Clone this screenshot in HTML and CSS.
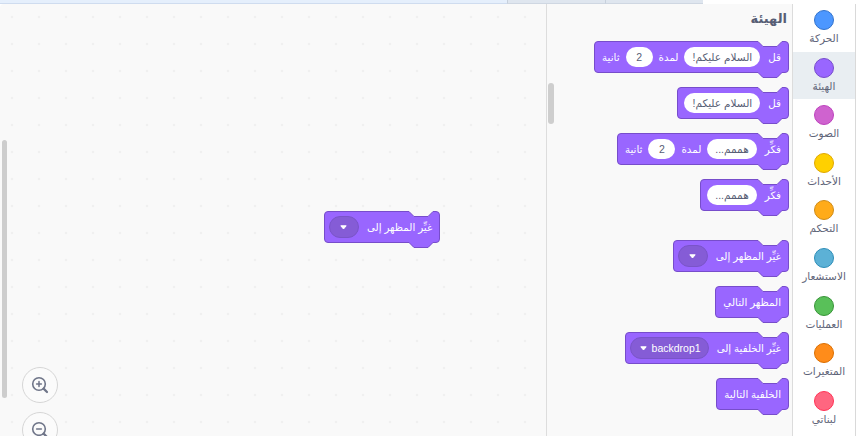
FILE: index.html
```html
<!DOCTYPE html>
<html lang="ar" dir="rtl">
<head>
<meta charset="utf-8">
<link rel="stylesheet" href="styles.css">
</head>
<body>
<div class="app">
  <div class="topbar">
    <div class="tb-blank"></div>
    <div class="tb-tab"></div>
    <div class="tb-tab"></div>
    <div class="tb-stage"></div>
  </div>
  <div class="main">
    <nav class="cats">
      <div class="cat"><span class="dot motion"></span><span class="cat-label">الحركة</span></div>
      <div class="cat selected"><span class="dot looks"></span><span class="cat-label">الهيئة</span></div>
      <div class="cat"><span class="dot sound"></span><span class="cat-label">الصوت</span></div>
      <div class="cat"><span class="dot events"></span><span class="cat-label">الأحداث</span></div>
      <div class="cat"><span class="dot control"></span><span class="cat-label">التحكم</span></div>
      <div class="cat"><span class="dot sensing"></span><span class="cat-label">الاستشعار</span></div>
      <div class="cat"><span class="dot operators"></span><span class="cat-label">العمليات</span></div>
      <div class="cat"><span class="dot variables"></span><span class="cat-label">المتغيرات</span></div>
      <div class="cat"><span class="dot myblocks"></span><span class="cat-label">لبناتي</span></div>
    </nav>

    <section class="flyout">
      <div class="fly-scroll"></div>
      <h2 class="fly-title">الهيئة</h2>
      <div class="block"><span class="lead">قل</span><span class="input">السلام عليكم!</span><span>لمدة</span><span class="input num">2</span><span>ثانية</span></div>
      <div class="block ends-input"><span class="lead">قل</span><span class="input">السلام عليكم!</span></div>
      <div class="block"><span class="lead">فكِّر</span><span class="input">هممم...</span><span>لمدة</span><span class="input num">2</span><span>ثانية</span></div>
      <div class="block ends-input"><span class="lead">فكِّر</span><span class="input">هممم...</span></div>
      <div class="block ends-dd group-start"><span class="lead">غيِّر المظهر إلى</span><span class="dd empty"><svg class="arrow" width="7" height="5" viewBox="0 0 7 5"><path d="M0.8 0.8 H6.2 L3.5 4 Z" fill="#fff" stroke="#fff" stroke-width="1" stroke-linejoin="round"/></svg></span></div>
      <div class="block"><span>المظهر التالي</span></div>
      <div class="block ends-dd"><span class="lead">غيِّر الخلفية إلى</span><span class="dd"><span class="dd-text">backdrop1</span><svg class="arrow" width="7" height="5" viewBox="0 0 7 5"><path d="M0.8 0.8 H6.2 L3.5 4 Z" fill="#fff" stroke="#fff" stroke-width="1" stroke-linejoin="round"/></svg></span></div>
      <div class="block"><span>الخلفية التالية</span></div>
    </section>

    <section class="workspace">
      <div class="ws-scroll"></div>
      <div class="block ends-dd ws-block"><span class="lead">غيِّر المظهر إلى</span><span class="dd empty"><svg class="arrow" width="7" height="5" viewBox="0 0 7 5"><path d="M0.8 0.8 H6.2 L3.5 4 Z" fill="#fff" stroke="#fff" stroke-width="1" stroke-linejoin="round"/></svg></span></div>
      <div class="zoom-btns">
        <div class="zoom-btn">
          <svg width="22" height="22" viewBox="0 0 22 22"><circle cx="10" cy="10" r="6.3" fill="none" stroke="#575e75" stroke-width="1.6"/><path d="M14.6 14.6 L18 18" stroke="#575e75" stroke-width="2.2" stroke-linecap="round"/><path d="M10 7.6 V12.4 M7.6 10 H12.4" stroke="#575e75" stroke-width="1.5" stroke-linecap="round"/></svg>
        </div>
        <div class="zoom-btn">
          <svg width="22" height="22" viewBox="0 0 22 22"><circle cx="10" cy="10" r="6.3" fill="none" stroke="#575e75" stroke-width="1.6"/><path d="M14.6 14.6 L18 18" stroke="#575e75" stroke-width="2.2" stroke-linecap="round"/><path d="M7.6 10 H12.4" stroke="#575e75" stroke-width="1.5" stroke-linecap="round"/></svg>
        </div>
      </div>
    </section>
  </div>
</div>
</body>
</html>
```

FILE: styles.css
```css
html, body {
  margin: 0;
  padding: 0;
}
body {
  width: 856px;
  height: 436px;
  overflow: hidden;
  font-family: "Liberation Sans", "DejaVu Sans", sans-serif;
  background: #ffffff;
}
.app {
  display: flex;
  flex-direction: column;
  height: 436px;
}
.topbar {
  height: 4px;
  display: flex;
  flex-direction: row-reverse;
  flex-shrink: 0;
}
.tb-blank {
  width: 507px;
  background: #e5effc;
  border-bottom: 1px solid #cfdcef;
  box-sizing: border-box;
}
.tb-tab {
  width: 98px;
  background: #dfe6ef;
  border-left: 1px solid #c7d0dc;
  border-bottom: 1px solid #cfd7e2;
  box-sizing: border-box;
}
.tb-stage {
  flex: 1;
  background: #ffffff;
}
.main {
  flex: 1;
  display: flex;
  min-height: 0;
}

/* category menu */
.cats {
  width: 62px;
  flex-shrink: 0;
  background: #ffffff;
  border-left: 1px solid #dcdcdc;
  border-right: 1px solid #d9d9d9;
  display: flex;
  flex-direction: column;
}
.cat {
  height: 47.6px;
  display: flex;
  flex-direction: column;
  align-items: center;
  padding-top: 6px;
  box-sizing: border-box;
}
.cat.selected {
  background: #e9eef2;
}
.dot {
  width: 20px;
  height: 20px;
  border-radius: 50%;
  box-sizing: border-box;
  border: 1px solid;
}
.cat-label {
  margin-top: 2px;
  font-size: 10.5px;
  line-height: 13px;
  color: #5f6579;
  white-space: nowrap;
}
.motion { background: #4c97ff; border-color: #3373cc; }
.looks { background: #9966ff; border-color: #774dcb; }
.sound { background: #cf63cf; border-color: #bd42bd; }
.events { background: #ffd000; border-color: #e0a800; }
.control { background: #ffab19; border-color: #cf8b17; }
.sensing { background: #5cb1d6; border-color: #2e8eb8; }
.operators { background: #59c059; border-color: #389438; }
.variables { background: #ff8c1a; border-color: #db6e00; }
.myblocks { background: #ff6680; border-color: #ff3355; }

/* flyout */
.flyout {
  width: 246px;
  flex-shrink: 0;
  background: #f9f9f9;
  border-left: 1px solid #dddddd;
  position: relative;
  display: flex;
  flex-direction: column;
  align-items: flex-start;
  padding: 7px 3px 0 0;
  box-sizing: border-box;
}
.fly-title {
  margin: 0 2px 14px 0;
  font-size: 13px;
  line-height: 16px;
  font-weight: bold;
  color: #575e75;
}
.fly-scroll {
  position: absolute;
  left: 1px;
  top: 79px;
  width: 6px;
  height: 41px;
  border-radius: 3px;
  background: #cecece;
}

/* blocks */
.block {
  position: relative;
  display: inline-flex;
  align-items: center;
  gap: 6px;
  height: 32px;
  padding: 0 7px;
  margin-bottom: 14px;
  box-sizing: border-box;
  background: #9966ff;
  border: 1px solid #774dcb;
  border-radius: 4px;
  color: #ffffff;
  font-size: 10.3px;
  white-space: nowrap;
}
.block .lead {
  margin-left: 2px;
}
.block.ends-input {
  padding-left: 6px;
}
.block.ends-dd {
  padding-left: 4px;
}
.block.group-start {
  margin-top: 15px;
}
.block::before {
  content: "";
  position: absolute;
  top: -1px;
  right: 5px;
  width: 26px;
  height: 7px;
  background-image: url("data:image/svg+xml,%3Csvg xmlns='http://www.w3.org/2000/svg' width='26' height='7'%3E%3Cpath d='M0 0 H26 V0.5 H25 L20 5.5 H6 L1 0.5 H0 Z' fill='%23f9f9f9'/%3E%3Cpath d='M0 0.5 H1 L6 5.5 H20 L25 0.5 H26' fill='none' stroke='%23774dcb'/%3E%3C/svg%3E");
}
.block::after {
  content: "";
  position: absolute;
  bottom: -7px;
  right: 5px;
  width: 26px;
  height: 7px;
  background-image: url("data:image/svg+xml,%3Csvg xmlns='http://www.w3.org/2000/svg' width='26' height='7'%3E%3Cpath d='M0.5 0 L6 5.8 H20 L25.5 0 Z' fill='%239966ff'/%3E%3Cpath d='M0 0.5 H1 L6 5.5 H20 L25 0.5 H26' fill='none' stroke='%23774dcb'/%3E%3C/svg%3E");
}
.input {
  display: inline-flex;
  align-items: center;
  justify-content: center;
  height: 20px;
  min-width: 27px;
  padding: 0 8px;
  box-sizing: border-box;
  border-radius: 10px;
  background: #ffffff;
  color: #575e75;
  font-size: 10.5px;
}
.dd {
  display: inline-flex;
  align-items: center;
  gap: 5px;
  height: 22px;
  padding: 0 7px 0 9px;
  box-sizing: border-box;
  border-radius: 11px;
  background: #855cd6;
  border: 1px solid #7a54c9;
  color: #ffffff;
}
.dd.empty {
  padding: 0 11px 0 10px;
}
.dd-text {
  font-size: 10.5px;
}
.arrow {
  display: block;
}

/* workspace */
.workspace {
  flex: 1;
  position: relative;
  background-color: #f9f9f9;
  background-image: radial-gradient(circle, #dedede 0.6px, rgba(222,222,222,0) 1.1px);
  background-size: 27px 27px;
  background-position: -1.5px -0.5px;
  border-top-left-radius: 4px;
  overflow: hidden;
}
.ws-scroll {
  position: absolute;
  left: 2px;
  top: 136px;
  width: 5px;
  height: 258px;
  border-radius: 3px;
  background: #cdcdcd;
}
.ws-block {
  position: absolute;
  left: 324px;
  top: 207px;
  margin: 0;
}
.zoom-btns {
  position: absolute;
  left: 22px;
  top: 363px;
  display: flex;
  flex-direction: column;
  gap: 9px;
}
.zoom-btn {
  width: 36px;
  height: 36px;
  box-sizing: border-box;
  border-radius: 50%;
  border: 1.5px solid #d6d6d6;
  background: #fbfbfb;
  display: flex;
  align-items: center;
  justify-content: center;
}
.zoom-btn svg {
  display: block;
  opacity: 0.85;
}
```
